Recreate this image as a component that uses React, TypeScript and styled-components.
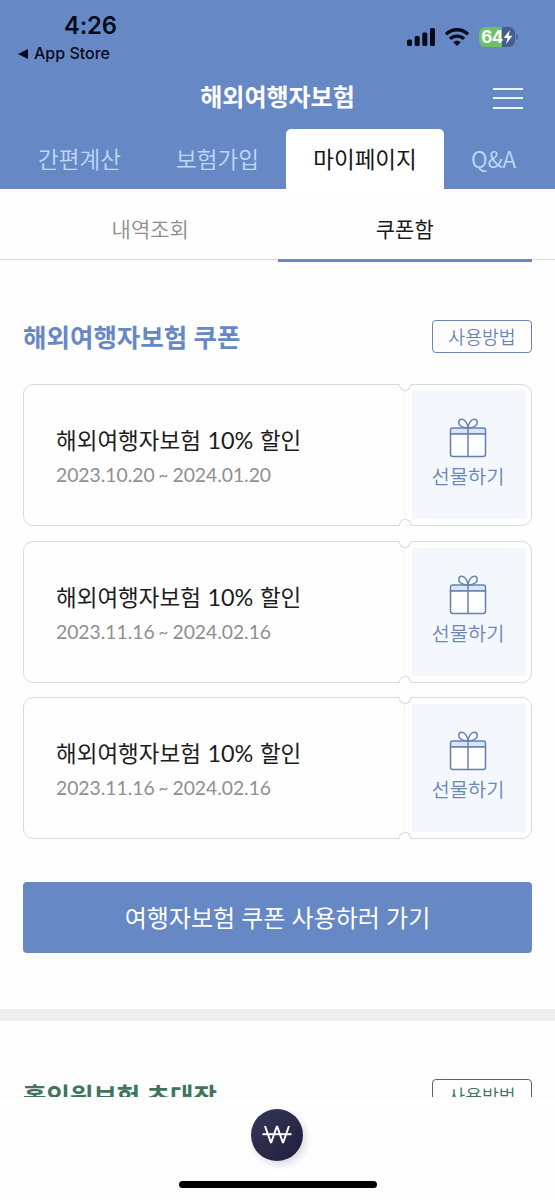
import React from "react";
import styled, { createGlobalStyle, css } from "styled-components";

const BLUE = "#6689c5";
const GREEN = "#40755d";

const GlobalStyle = createGlobalStyle`
  * { box-sizing: border-box; }
  body {
    margin: 0;
    background: #fff;
    font-family: "Lato", "Noto Sans CJK KR", sans-serif;
  }
  button { font: inherit; padding: 0; margin: 0; border: 0; background: none; }
`;

const Screen = styled.div`
  position: relative;
  width: 555px;
  height: 1200px;
  overflow: hidden;
  background: #fefefe;
`;

const Header = styled.header`
  height: 189px;
  display: flex;
  flex-direction: column;
  background: ${BLUE};
`;

const StatusBar = styled.div`
  height: 66px;
  display: flex;
  justify-content: space-between;
  padding: 12px 40px 0 18px;
  color: #060b1c;
  font-family: "Inter", sans-serif;
`;

const StatusLeft = styled.div`
  display: flex;
  flex-direction: column;
`;

const Clock = styled.div`
  margin-left: 46px;
  font-size: 23.8px;
  line-height: 28px;
  font-weight: 600;
  letter-spacing: -0.2px;
`;

const BackLink = styled.div`
  display: flex;
  align-items: center;
  gap: 6px;
  font-size: 16px;
  line-height: 27px;
  font-weight: 500;
`;

const StatusRight = styled.div`
  display: flex;
  align-items: center;
  gap: 10px;
  height: 50px;
`;

const Battery = styled.div`
  display: flex;
  align-items: center;
  justify-content: center;
  width: 36px;
  height: 20px;
  border-radius: 6px;
  color: #fff;
  background: linear-gradient(90deg, #6cc067 0 23px, #435e91 23px);
  font-size: 17px;
  font-weight: 700;
  letter-spacing: -0.6px;
`;

const TitleRow = styled.div`
  height: 61px;
  display: grid;
  grid-template-columns: 1fr auto 1fr;
  align-items: center;
  padding: 0 32px;
`;

const Title = styled.h1`
  grid-column: 2;
  margin: 0;
  color: #fff;
  font-size: 24px;
  line-height: 36px;
  font-weight: 700;
`;

const MenuButton = styled.button`
  justify-self: end;
  width: 30px;
  height: 21px;
  margin-top: 3px;
  display: flex;
  flex-direction: column;
  justify-content: space-between;
`;

const MenuLine = styled.span`
  width: 30px;
  height: 2px;
  background: #e6f7ff;
`;

const MainTabs = styled.nav`
  height: 60px;
  margin-top: 2px;
  display: grid;
  grid-template-columns: 149px 137px 158px 99px;
`;

const MainTab = styled.button<{ $active?: boolean; $shift?: number }>`
  height: 60px;
  padding: 0 0 2px ${(p) => p.$shift ?? 0}px;
  border-radius: 5px 5px 0 0;
  font-family: "Noto Sans CJK KR", sans-serif;
  font-size: 22.5px;
  line-height: 58px;
  white-space: nowrap;
  ${(p) =>
    p.$active
      ? css`background: #fff; color: #161616;`
      : css`color: #bfd9fb; font-weight: 350;`}
`;

const SubTabs = styled.nav`
  height: 73px;
  display: grid;
  grid-template-columns: 1fr 1fr;
  padding: 0 23px;
  background: linear-gradient(#dcdce0, #dcdce0) 0 70px / 100% 1px no-repeat;
`;

const SubTab = styled.button<{ $active?: boolean }>`
  height: 73px;
  font-family: "Noto Sans CJK KR", sans-serif;
  font-size: 21px;
  line-height: 79px;
  color: ${(p) => (p.$active ? "#1b1b1b" : "#8e8e8e")};
  font-weight: ${(p) => (p.$active ? 400 : 350)};
  border-bottom: ${(p) => (p.$active ? `3px solid ${BLUE}` : "3px solid transparent")};
`;

const Section = styled.section`
  padding: 56px 23px 0;
`;

const SectionHead = styled.div`
  height: 37px;
  display: flex;
  align-items: center;
  justify-content: space-between;
`;

const SectionTitle = styled.h2<{ $color: string }>`
  margin: 0;
  padding-top: 2px;
  color: ${(p) => p.$color};
  font-size: 25.5px;
  line-height: 37px;
  font-weight: 700;
`;

const HelpButton = styled.button<{ $color: string }>`
  width: 100px;
  height: 33px;
  border: 1.5px solid ${(p) => p.$color};
  border-radius: 4px;
  color: ${(p) => p.$color};
  font-size: 18.3px;
  line-height: 32px;
  font-weight: 350;
`;

const CouponList = styled.div`
  margin-top: 29px;
  display: flex;
  flex-direction: column;
  gap: 14.5px;
`;

const CouponCard = styled.article`
  position: relative;
  height: 142px;
  display: flex;
  align-items: stretch;
  justify-content: space-between;
  padding: 6px 5px 6px 32px;
  border: 1px solid #d9d9db;
  border-radius: 10px;
`;

const Notch = styled.span<{ $side: "top" | "bottom" }>`
  position: absolute;
  left: 375px;
  width: 12px;
  height: 7px;
  background: #fefefe;
  border: 1px solid #d9d9db;
  ${(p) =>
    p.$side === "top"
      ? css`top: -1px; border-top-color: #fefefe; border-radius: 0 0 7px 7px;`
      : css`bottom: -1px; border-bottom-color: #fefefe; border-radius: 7px 7px 0 0;`}
`;

const CouponInfo = styled.div`
  width: 349px;
  height: 128px;
  margin-right: 1px;
  border-right: 1px dotted #ececee;
  padding-top: 33px;
`;

const CouponName = styled.div`
  color: #1c1c1c;
  font-size: 22.5px;
  line-height: 34px;
  word-spacing: 0.8px;
`;

const Rate = styled.span`
  font-size: 23.4px;
  line-height: 1;
`;

const CouponDate = styled.div`
  display: flex;
  align-items: center;
  gap: 4px;
  color: #8f8f8f;
  font-size: 19.3px;
  line-height: 24px;
  margin-top: 5px;
`;

const Tilde = styled.span`
  font-size: 17px;
`;

const GiftButton = styled.button`
  width: 114px;
  height: 128px;
  display: flex;
  flex-direction: column;
  align-items: center;
  padding: 27px 2px 0 0;
  background: #f4f7fb;
  color: #6c86b8;
  font-size: 19.8px;
  line-height: 30px;
  font-weight: 350;
`;

const GiftLabel = styled.span`
  margin-top: 3px;
`;

const UseButton = styled.button`
  display: block;
  width: 509px;
  height: 71px;
  margin-top: 42.5px;
  border-radius: 4px;
  background: ${BLUE};
  color: #fff;
  font-size: 24px;
  line-height: 71px;
`;

const Divider = styled.div`
  height: 12px;
  margin-top: 56.5px;
  background: #eeeef0;
`;

const BottomBar = styled.footer`
  position: absolute;
  left: 0;
  right: 0;
  bottom: 0;
  height: 103px;
  display: flex;
  flex-direction: column;
  align-items: center;
  padding: 11px 0 0;
  background: #fefefe;
  border-top: 1px solid #f7f7f8;
`;

const WonButton = styled.button`
  width: 52px;
  height: 52px;
  margin-right: 1px;
  display: flex;
  align-items: center;
  justify-content: center;
  border-radius: 50%;
  background: linear-gradient(135deg, #363659, #1f1f3b);
  box-shadow: 3px 4px 7px rgba(60, 60, 110, 0.18);
`;

const HomeIndicator = styled.div`
  width: 198px;
  height: 7px;
  margin-top: 20px;
  border-radius: 4px;
  background: #000;
`;

const GiftIcon = () => (
  <svg width="38" height="40" viewBox="0 0 38 40" fill="none" stroke="#6880ae" strokeWidth="1.5">
    <path d="M3.500 10h31a2 2 0 0 1 2 2v4h-35v-4a2 2 0 0 1 2-2z" fill="#d6e5fa" />
    <path d="M1.500 16h35v20a2.500 2.500 0 0 1-2.500 2.500h-30A2.500 2.500 0 0 1 1.500 36z" fill="#fcfdff" />
    <path d="M19 10v28.500" />
    <path d="M19 10C18.500 5 15.500 1 12.500 1.200C9 1.500 9 6 11.800 8C13.500 9.200 16 9.800 19 10z" />
    <path d="M19 10C19.500 5 22.500 1 25.500 1.200C29 1.500 29 6 26.200 8C24.500 9.200 22 9.800 19 10z" />
  </svg>
);

const SignalIcon = () => (
  <svg width="28" height="18" viewBox="0 0 28 18" fill="#060b1c">
    <rect x="0" y="11.500" width="5" height="6.500" rx="1.500" />
    <rect x="7.700" y="8" width="5" height="10" rx="1.500" />
    <rect x="15.300" y="4.500" width="5" height="13.500" rx="1.500" />
    <rect x="23" y="0" width="5" height="18" rx="1.500" />
  </svg>
);

const WifiIcon = () => (
  <svg width="24" height="18" viewBox="0 0 24 18" fill="none" stroke="#060b1c" strokeWidth="3.300">
    <path d="M1 6.300C7 .2 17 .2 23 6.300" />
    <path d="M5 10.900C9 7.100 15 7.100 19 10.900" />
    <path d="M8.300 14.200C10.500 12.200 13.500 12.200 15.700 14.200L12 18z" fill="#060b1c" stroke="none" />
  </svg>
);

const BoltIcon = () => (
  <svg width="10" height="14" viewBox="0 0 10 14" fill="#fff">
    <path d="M7 0L.5 8H4.500L3 14L9.500 5.800H5.500z" />
  </svg>
);

const BatteryTip = styled.span`
  width: 2px;
  height: 6px;
  margin-left: -9px;
  margin-right: -3px;
  border-radius: 0 2px 2px 0;
  background: #4d68a0;
`;

const BackArrow = () => (
  <svg width="10" height="10" viewBox="0 0 10 10" fill="#060b1c">
    <path d="M0 5L10 0V10z" />
  </svg>
);

const WonIcon = () => (
  <svg width="30" height="20" viewBox="0 0 30 20" fill="none" stroke="#fff" strokeWidth="2">
    <path d="M3 1L9 18L15 1L21 18L27 1" strokeLinejoin="bevel" />
    <path d="M.5 9.200h29" />
  </svg>
);

const coupons = [
  { name: "해외여행자보험", rate: "10%", from: "2023.10.20", to: "2024.01.20" },
  { name: "해외여행자보험", rate: "10%", from: "2023.11.16", to: "2024.02.16" },
  { name: "해외여행자보험", rate: "10%", from: "2023.11.16", to: "2024.02.16" },
];

export default function App() {
  return (
    <Screen>
      <GlobalStyle />
      <Header>
        <StatusBar>
          <StatusLeft>
            <Clock>4:26</Clock>
            <BackLink>
              <BackArrow />
              App Store
            </BackLink>
          </StatusLeft>
          <StatusRight>
            <SignalIcon />
            <WifiIcon />
            <Battery>
              64
              <BoltIcon />
            </Battery>
            <BatteryTip />
          </StatusRight>
        </StatusBar>
        <TitleRow>
          <Title>해외여행자보험</Title>
          <MenuButton aria-label="메뉴">
            <MenuLine />
            <MenuLine />
            <MenuLine />
          </MenuButton>
        </TitleRow>
        <MainTabs>
          <MainTab $shift={10}>간편계산</MainTab>
          <MainTab>보험가입</MainTab>
          <MainTab $active>마이페이지</MainTab>
          <MainTab>Q&amp;A</MainTab>
        </MainTabs>
      </Header>
      <SubTabs>
        <SubTab>내역조회</SubTab>
        <SubTab $active>쿠폰함</SubTab>
      </SubTabs>
      <Section>
        <SectionHead>
          <SectionTitle $color={BLUE}>해외여행자보험 쿠폰</SectionTitle>
          <HelpButton $color="#6c84b2">사용방법</HelpButton>
        </SectionHead>
        <CouponList>
          {coupons.map((coupon, i) => (
            <CouponCard key={i}>
              <CouponInfo>
                <CouponName>
                  {coupon.name} <Rate>{coupon.rate}</Rate> 할인
                </CouponName>
                <CouponDate>
                  {coupon.from} <Tilde>~</Tilde> {coupon.to}
                </CouponDate>
              </CouponInfo>
              <GiftButton>
                <GiftIcon />
                <GiftLabel>선물하기</GiftLabel>
              </GiftButton>
              <Notch $side="top" />
              <Notch $side="bottom" />
            </CouponCard>
          ))}
        </CouponList>
        <UseButton>여행자보험 쿠폰 사용하러 가기</UseButton>
      </Section>
      <Divider />
      <Section>
        <SectionHead>
          <SectionTitle $color={GREEN}>홀인원보험 초대장</SectionTitle>
          <HelpButton $color={GREEN}>사용방법</HelpButton>
        </SectionHead>
      </Section>
      <BottomBar>
        <WonButton aria-label="원">
          <WonIcon />
        </WonButton>
        <HomeIndicator />
      </BottomBar>
    </Screen>
  );
}
